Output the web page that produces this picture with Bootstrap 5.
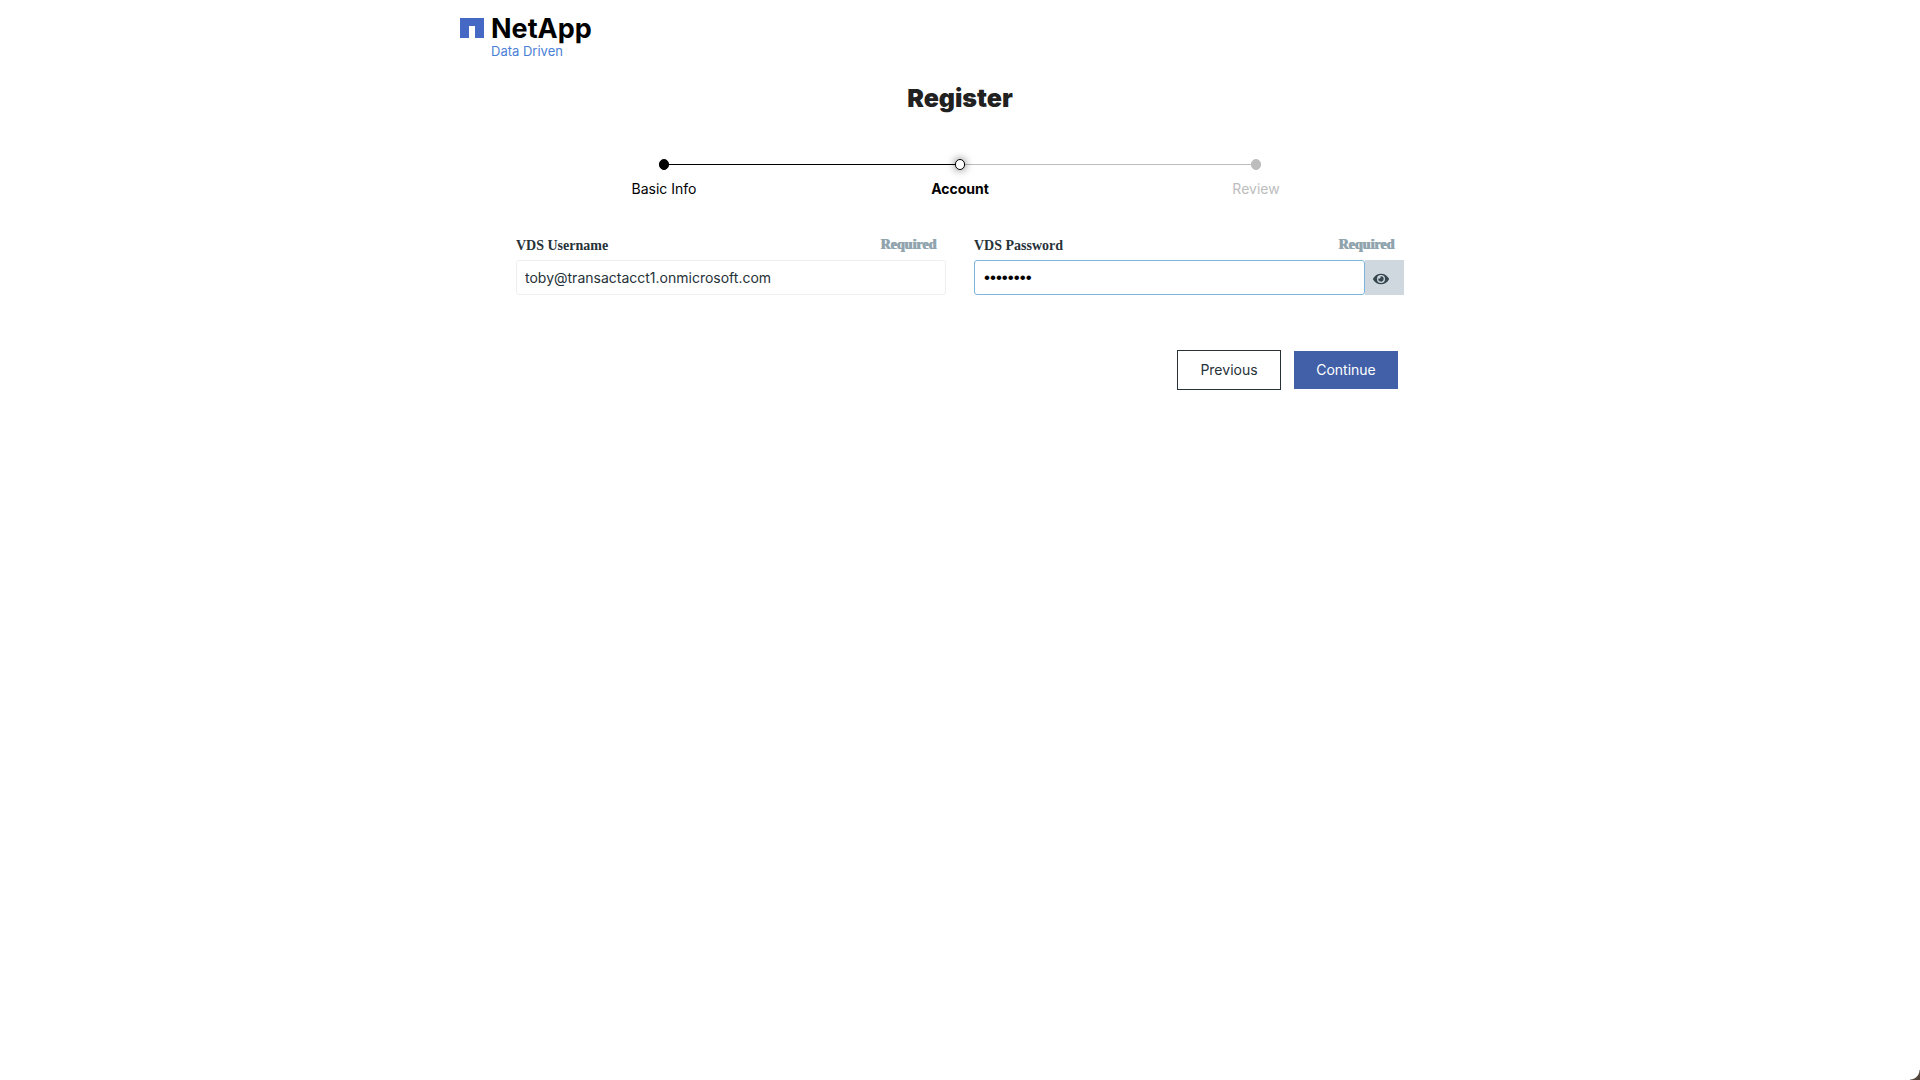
<!DOCTYPE html>
<html lang="en">
<head>
<meta charset="utf-8">
<meta name="viewport" content="width=device-width, initial-scale=1">
<title>Register</title>
<link href="https://cdn.jsdelivr.net/npm/bootstrap@5.3.0/dist/css/bootstrap.min.css" rel="stylesheet">
<style>
  body { font-family: Inter, "Noto Sans", sans-serif; font-size: 14px; line-height: 20px; color: #263238; background: #fff; min-height: 100vh; }
  .page-shell { max-width: 1000px; }
  .form-shell { max-width: 888px; }
  .brand-link { gap: 7px; padding-top: 16px; color: #000; }
  .brand-mark { margin-top: 2px; }
  .brand-name { font-size: 27px; line-height: 26px; font-weight: 700; }
  .brand-tagline { font-size: 13px; line-height: 18px; color: #4a7fd6; }
  .page-title { font-size: 25px; line-height: 32px; font-weight: 900; color: #212121; margin: 22px 0 45px; }
  .step { flex: 1 1 0; position: relative; text-align: center; color: #000; }
  .step + .step::before { content: ""; position: absolute; top: 5px; right: 50%; width: 100%; height: 1px; background: #000; }
  .step.step-todo::before { background: #bdbdbd; }
  .step-dot { display: block; position: relative; z-index: 1; width: 10px; height: 11px; margin: 0 auto 9px; border: 1px solid #000; border-radius: 5px; background: #000; }
  .step-current { font-weight: 700; }
  .step-current .step-dot { background: #fff; box-shadow: 0 0 8px rgba(0,0,0,.6); }
  .step-todo { color: #bdbdbd; }
  .step-todo .step-dot { background: #bdbdbd; border-color: #bdbdbd; }
  .step-current { z-index: 2; }
  .fields { gap: 28px; margin-top: 36px; }
  .field { flex: 1 1 0; min-width: 0; }
  .field-head { padding-bottom: 4px; }
  .field-label, .field-hint { font-family: "Liberation Serif", serif; font-size: 14px; line-height: 20px; font-weight: 700; }
  .field-hint { color: #90a4ae; padding-right: 10px; margin-bottom: 1px; text-shadow: 1px 0 #90a4ae; }
  .field-input { height: 35px; padding: 0 8px; font-size: 14px; line-height: 20px; color: #263238; border: 1px solid #eceff1; border-radius: 3px; box-shadow: none; }
  .field-password, .field-password:focus { font-family: "Liberation Sans", sans-serif; font-size: 17px; color: #000; border-color: #7cb5dc; box-shadow: none; padding-left: 9px; }
  .reveal { width: 39px; padding: 2px 8px 0 0; border: 0; border-radius: 0; background: #cfd8df; color: #37474f; }
  .reveal:hover { background: #c3ced6; color: #37474f; }
  .actions { gap: 13px; padding: 55px 6px 0; }
  .action { width: 104px; height: 38px; padding: 0; border: 0; border-radius: 0; font-size: 14px; line-height: 20px; }
  .action-prev { height: 40px; border: 1px solid #263238; color: #263238; background: #fff; }
  .action-next, .action-next:hover { background: #4160a8; color: #fff; }
  .window-corner { right: 0; bottom: 0; width: 10px; height: 10px; background: radial-gradient(circle at 0 0, transparent 9px, #51453c 10px); }
</style>
<script src="https://cdn.jsdelivr.net/npm/bootstrap@5.3.0/dist/js/bootstrap.bundle.min.js"></script>
</head>
<body>
<div class="page-shell mx-auto">
  <header>
    <a href="#" class="brand-link d-inline-flex align-items-start text-decoration-none">
      <svg class="brand-mark" width="24" height="20" viewBox="0 0 24 20" aria-hidden="true"><path fill="#4668c5" d="M0 0h24v20h-9V8H9v12H0z"/></svg>
      <span class="d-flex flex-column">
        <span class="brand-name">NetApp</span>
        <span class="brand-tagline">Data Driven</span>
      </span>
    </a>
  </header>
  <main class="form-shell mx-auto">
    <h1 class="page-title text-center">Register</h1>
    <ol class="list-unstyled d-flex mb-0">
      <li class="step"><span class="step-dot"></span>Basic Info</li>
      <li class="step step-current" aria-current="step"><span class="step-dot"></span>Account</li>
      <li class="step step-todo"><span class="step-dot"></span>Review</li>
    </ol>
    <form>
      <div class="fields d-flex">
        <div class="field">
          <div class="field-head d-flex justify-content-between align-items-end">
            <label class="field-label" for="username">VDS Username</label>
            <span class="field-hint">Required</span>
          </div>
          <input class="field-input form-control" id="username" type="text" value="toby@transactacct1.onmicrosoft.com">
        </div>
        <div class="field">
          <div class="field-head d-flex justify-content-between align-items-end">
            <label class="field-label" for="password">VDS Password</label>
            <span class="field-hint">Required</span>
          </div>
          <div class="d-flex">
            <input class="field-input field-password form-control" id="password" type="password" value="password">
            <button class="reveal btn d-flex align-items-center justify-content-center flex-shrink-0" type="button" aria-label="Show password">
              <svg width="16" height="12" viewBox="0 0 576 432" fill="currentColor" aria-hidden="true"><path d="M572.5 201.400C518.300 95.600 410.900 24 288 24S57.700 95.600 3.500 201.400a32.400 32.400 0 0 0 0 29.200C57.700 336.400 165.100 408 288 408s230.300-71.600 284.500-177.400a32.400 32.400 0 0 0 0-29.200zM288 360a144 144 0 1 1 144-144 144 144 0 0 1-144 144zm0-240a95.300 95.300 0 0 0-25.300 3.800 47.900 47.900 0 0 1-66.900 66.900A95.800 95.800 0 1 0 288 120z"/></svg>
            </button>
          </div>
        </div>
      </div>
      <div class="actions d-flex justify-content-end align-items-center">
        <button class="action action-prev btn" type="button">Previous</button>
        <button class="action action-next btn" type="submit">Continue</button>
      </div>
    </form>
  </main>
</div>
<div class="window-corner position-fixed"></div>
</body>
</html>
